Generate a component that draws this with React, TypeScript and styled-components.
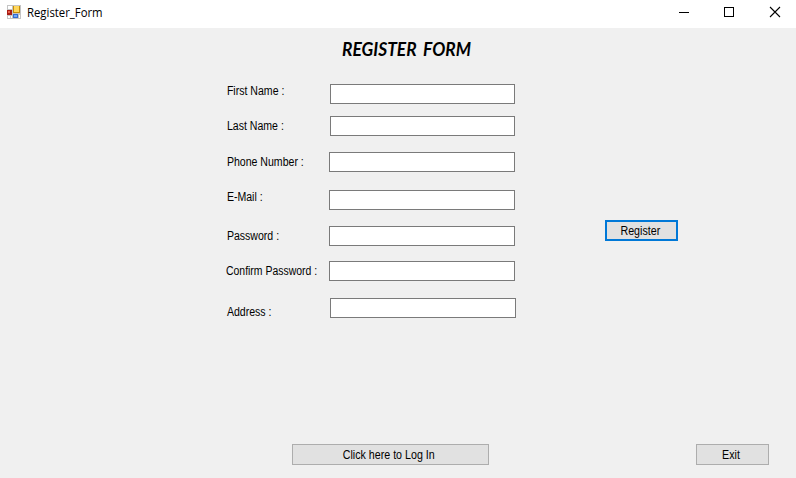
import React from "react";
import styled, { createGlobalStyle } from "styled-components";

const GlobalStyle = createGlobalStyle`
  * { box-sizing: border-box; }
  body { margin: 0; background: #f0f0f0; }
`;

const Window = styled.div`
  width: 796px;
  height: 478px;
  display: flex;
  flex-direction: column;
  overflow: hidden;
  background: #f0f0f0;
  color: #000;
  font: 12px/16px "Liberation Sans", sans-serif;
`;

const TitleBar = styled.header`
  flex: none;
  height: 28px;
  display: flex;
  background: #fff;
`;

const AppIcon = styled.svg`
  width: 14px;
  height: 14px;
  margin: 5px 6px 0 7px;
`;

const WindowTitle = styled.span`
  flex: 1;
  padding-top: 5px;
  font: 12px/16px "Open Sans", sans-serif;
  transform: scaleX(0.945);
  transform-origin: left;
`;

const CaptionIcon = styled.svg`
  width: 45px;
  height: 28px;
  fill: none;
  stroke: #000;
`;

const Heading = styled.h1`
  margin: 9px 0 0 342px;
  width: max-content;
  height: 24px;
  font: italic 700 19px/24px Lato, sans-serif;
  word-spacing: 3px;
  white-space: nowrap;
  transform: scaleX(0.915);
  transform-origin: left;
`;

const Body = styled.main`
  display: flex;
  height: 383px;
  padding-top: 23px;
`;

const Fields = styled.form`
  width: 605px;
  padding-left: 226px;
`;

const Field = styled.label<{ $height: number; $labelTop: number }>`
  display: flex;
  height: ${(p) => p.$height}px;
  & > span { margin-top: ${(p) => p.$labelTop}px; }
`;

const Caption = styled.span<{ $nudge: number }>`
  flex: none;
  height: 16px;
  white-space: nowrap;
  padding-left: ${(p) => p.$nudge}px;
  width: 103px;
  transform: scaleX(${(p) => (p.$nudge ? 0.88 : 0.87)});
  transform-origin: left;
`;

const TextBox = styled.input<{ $left: number; $width: number }>`
  width: ${(p) => p.$width}px;
  height: 20px;
  margin: 0 0 0 ${(p) => p.$left}px;
  padding: 2px;
  border: 1px solid #7a7a7a;
  border-radius: 0;
  background: #fff;
  outline: none;
`;

const Button = styled.button<{ $width: number; $primary?: boolean }>`
  width: ${(p) => p.$width}px;
  height: 21px;
  padding: 0;
  display: flex;
  align-items: center;
  justify-content: center;
  border: ${(p) => (p.$primary ? "2px solid #0078d7" : "1px solid #adadad")};
  border-radius: 0;
  background: #e1e1e1;
  color: #000;
  font: 12px/16px "Liberation Sans", sans-serif;
`;

const ButtonText = styled.span<{ $shift?: number }>`
  white-space: nowrap;
  margin-right: ${(p) => p.$shift ?? 0}px;
  transform: scaleX(0.89);
`;

const Actions = styled.div`
  padding-top: 136px;
`;

const Footer = styled.footer`
  display: flex;
  justify-content: space-between;
  padding: 0 27px 0 292px;
`;

const fields = [
  { label: "First Name :", height: 32, top: -1, nudge: 1, left: 1, width: 185 },
  { label: "Last Name :", height: 36, top: 2, nudge: 1, left: 1, width: 185 },
  { label: "Phone Number :", height: 38, top: 2, nudge: 1, left: 0, width: 186 },
  { label: "E-Mail :", height: 36, top: -1, nudge: 1, left: 0, width: 186 },
  { label: "Password :", height: 35, top: 2, nudge: 1, left: 0, width: 186 },
  { label: "Confirm Password :", height: 37, top: 2, nudge: 0, left: 0, width: 186 },
  { label: "Address :", height: 30, top: 6, nudge: 1, left: 1, width: 186 },
];

export default function App() {
  return (
    <Window>
      <GlobalStyle />
      <TitleBar>
        <AppIcon viewBox="0 0 14 14" shapeRendering="crispEdges">
          <path fill="#c4c4c4" d="M0 0h14v14H0z" />
          <path fill="#fff" d="M1 1h4v3H1zM1 11h2v2H1zM4 11h1v2H4zM12 10h1v3h-1z" />
          <path fill="#a91d15" d="M0 5h5v5H0z" />
          <path fill="#e8604c" d="M1 6h2v2H1z" />
          <path fill="#c58d0b" d="M6 1h7v7H6z" />
          <path fill="#ffd75b" d="M7 1h5v6H7z" />
          <path fill="#326bd1" d="M6 9h5v4H6z" />
          <path fill="#6fa8fa" d="M7 10h3v2H7z" />
        </AppIcon>
        <WindowTitle>Register_Form</WindowTitle>
        <CaptionIcon viewBox="0 0 45 28" shapeRendering="crispEdges">
          <path d="M18 12.5h10" />
        </CaptionIcon>
        <CaptionIcon viewBox="0 0 45 28" shapeRendering="crispEdges">
          <path d="M18.5 7.5h9v9h-9z" />
        </CaptionIcon>
        <CaptionIcon viewBox="0 0 45 28">
          <path strokeWidth="1.1" d="m19 7 10 10M29 7 19 17" />
        </CaptionIcon>
      </TitleBar>
      <Heading>REGISTER FORM</Heading>
      <Body>
        <Fields>
          {fields.map((f) => (
            <Field key={f.label} $height={f.height} $labelTop={f.top}>
              <Caption $nudge={f.nudge}>{f.label}</Caption>
              <TextBox $left={f.left} $width={f.width} />
            </Field>
          ))}
        </Fields>
        <Actions>
          <Button $width={73} $primary>
            <ButtonText $shift={2}>Register</ButtonText>
          </Button>
        </Actions>
      </Body>
      <Footer>
        <Button $width={197}>
          <ButtonText $shift={3}>Click here to Log In</ButtonText>
        </Button>
        <Button $width={73}>
          <ButtonText $shift={3}>Exit</ButtonText>
        </Button>
      </Footer>
    </Window>
  );
}
